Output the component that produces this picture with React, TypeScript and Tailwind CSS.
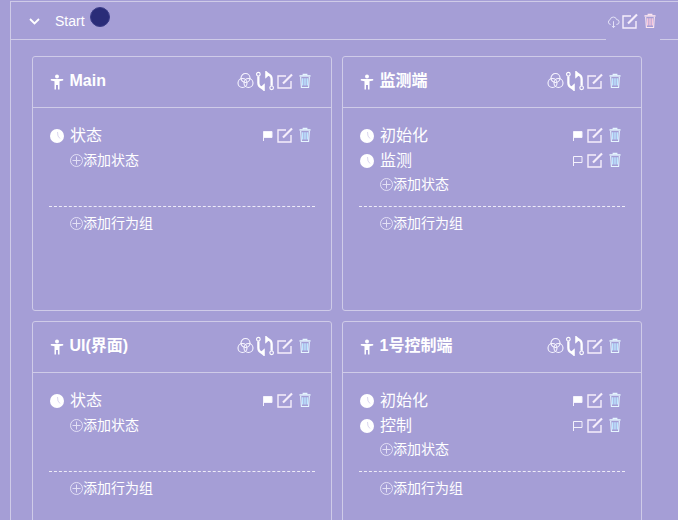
const F = '[font-family:"Liberation_Sans","Noto_Sans_CJK_SC",sans-serif]';

function Person() {
  return (
    <svg width="14" height="16" viewBox="0 0 14 16" className="shrink-0" fill="#fff">
      <circle cx="7" cy="2.400" r="2" />
      <path d="M.8 5h12.400v1.500L9.500 7.200V15.500H8V11H6v4.500H4.500V7.200L.8 6.500z" />
    </svg>
  );
}
function Circles() {
  return (
    <svg width="17" height="17" viewBox="0 0 17 17" fill="none" stroke="#f7f5ff" strokeWidth="1.100">
      <circle cx="8.500" cy="6" r="4.500" />
      <circle cx="5.500" cy="11" r="4.500" />
      <circle cx="11.500" cy="11" r="4.500" />
    </svg>
  );
}
function Compare() {
  return (
    <svg width="18" height="20" viewBox="0 0 19 20" fill="none" stroke="#fff" strokeWidth="2.400">
      <circle cx="2.500" cy="2.800" r="1.900" strokeWidth="1.200" />
      <circle cx="16.500" cy="17.200" r="1.900" strokeWidth="1.200" />
      <path d="M2.500 5v7q0 4 4 5h2" />
      <path d="M9 13v8l-4.500-4z" fill="#fff" strokeWidth="0.600" />
      <path d="M16.500 15V8q0-4-4-5h-2" />
      <path d="M10 -1v8l4.500-4z" fill="#fff" strokeWidth="0.600" />
    </svg>
  );
}
function Edit() {
  return (
    <svg width="16" height="16" viewBox="0 0 16 16" fill="none" stroke="#f6eefb" strokeWidth="1.400">
      <path d="M9 3H1v12h13V8" />
      <path d="M6 10.500 15 1.500" strokeWidth="2.200" />
    </svg>
  );
}
function Trash() {
  return (
    <svg width="12" height="16" viewBox="0 0 13 16" fill="none" stroke="#e6f6ff" strokeWidth="1.200">
      <path d="M4.500 2V.8h4V2" />
      <path d="M.500 2.500h12" strokeWidth="1.600" />
      <path d="M1.800 3.500 2.600 15h7.800l.8-11.500" />
      <path d="M4 5v8M6.500 5v8M9 5v8" stroke="#bde6ff" strokeWidth="1.600" />
    </svg>
  );
}
function PinkTrash() {
  return (
    <svg width="12" height="16" viewBox="0 0 13 16" fill="none" stroke="#fde6f0" strokeWidth="1.200">
      <path d="M4.500 2V.8h4V2" />
      <path d="M.500 2.500h12" strokeWidth="1.600" />
      <path d="M1.800 3.500 2.600 15h7.800l.8-11.500" />
      <path d="M4 5v8M6.500 5v8M9 5v8" stroke="#f8c8dc" strokeWidth="1.600" />
    </svg>
  );
}
function Cloud() {
  return (
    <svg width="13" height="12" viewBox="0 0 15 15" fill="none" stroke="#ecebfa" strokeWidth="1.100">
      <path d="M4 10.500H3.500a3 3 0 0 1-.3-5.800 4.200 4.200 0 0 1 8.200-.2 3 3 0 0 1 .3 6H11" />
      <path d="M7.500 6.500v8M5.500 12.500l2 2 2-2" />
    </svg>
  );
}
function Flag({ filled }: { filled: boolean }) {
  return (
    <svg width="10" height="10" viewBox="0 0 10 10" fill={filled ? "#fff" : "none"} stroke="#f4f2fc" strokeWidth="1">
      <path d="M.500 10V.500h8.500v6H.500" />
    </svg>
  );
}
function Clock() {
  return (
    <svg width="14" height="14" viewBox="0 0 14 14" className="shrink-0">
      <circle cx="7" cy="7" r="7" fill="#fff" />
      <path d="M7.500 3 8 7l2 2.500" stroke="#cfcbea" strokeWidth="0.800" fill="none" />
    </svg>
  );
}
function Plus() {
  return (
    <svg width="13" height="13" viewBox="0 0 13 13" fill="none" stroke="#e2dff5" strokeWidth="1" className="shrink-0">
      <circle cx="6.500" cy="6.500" r="6" />
      <path d="M6.500 2.500v8M2.500 6.500h8" />
    </svg>
  );
}
function AddRow({ label, tight }: { label: string; tight?: boolean }) {
  return (
    <div className={tight ? "flex items-center h-[25px] -mt-px pl-[20px] text-[14px] text-white" : "flex items-center h-[25px] pl-[20px] text-[14px] text-white"}>
      <Plus />
      <span>{label}</span>
    </div>
  );
}
function State({ name, filled }: { name: string; filled: boolean }) {
  return (
    <div className="flex items-center h-[25px]">
      <Clock />
      <span className="ml-[6px] text-[16px] text-white">{name}</span>
      <div className="ml-auto flex items-center pr-[4px] mb-[2px]">
        <span className="mt-[2px] flex"><Flag filled={filled} /></span>
        <span className="ml-[4px] flex"><Edit /></span>
        <span className="ml-[6px] flex"><Trash /></span>
      </div>
    </div>
  );
}
function Card({ title, states }: { title: string; states: { name: string; filled: boolean }[] }) {
  const single = states.length === 1;
  return (
    <div className="w-[300px] h-[255px] border border-[#cfcbe8] rounded-[3px]">
      <div className="h-[51px] border-b border-[#cfcbe8] flex items-center pl-[17px] pr-[20px]">
        <Person />
        <span className="ml-[5.500px] mb-[2px] text-[16px] font-bold text-white">{title}</span>
        <div className="ml-auto flex items-center mb-[3px]">
          <Circles />
          <span className="ml-[2px] flex"><Compare /></span>
          <span className="ml-[3px] flex"><Edit /></span>
          <span className="ml-[6px] flex"><Trash /></span>
        </div>
      </div>
      <div className="pt-[15px] pl-[17px] pr-[16px]">
        {states.map((s) => (
          <State key={s.name} name={s.name} filled={s.filled} />
        ))}
        <AddRow label="添加状态" tight={!single} />
        <div className={single ? "mt-[33px] -ml-px border-t border-dashed border-[#eeecf8]" : "mt-[9px] -ml-px border-t border-dashed border-[#eeecf8]"} />
        <div className="mt-[4px]">
          <AddRow label="添加行为组" />
        </div>
      </div>
    </div>
  );
}

export default function App() {
  return (
    <div className={`relative w-[678px] h-[520px] overflow-hidden bg-[#a59ed6] pl-[10px] pt-[1px] ${F}`}>
      <div className="border-l border-t border-[#cfcbe8] h-[600px]">
        <div className="h-[38px] border-b border-[#cfcbe8] flex items-center pl-[18px] pt-[2px]">
          <svg width="11" height="7" viewBox="0 0 11 7" fill="none" stroke="#fff" strokeWidth="1.800">
            <path d="M1 1l4.500 4.500L10 1" />
          </svg>
          <span className="ml-[15px] text-[14px] text-white">Start</span>
          <span className="ml-[5px] mb-[9px] w-[20px] h-[20px] rounded-full bg-[#2a2c78] border border-[#3a3c88]" />
        </div>
        <div className="pl-[21px] pt-[16px] grid grid-cols-[300px_300px] gap-x-[10px] gap-y-[10px]">
          <Card title="Main" states={[{ name: "状态", filled: true }]} />
          <Card title="监测端" states={[{ name: "初始化", filled: true }, { name: "监测", filled: false }]} />
          <Card title="UI(界面)" states={[{ name: "状态", filled: true }]} />
          <Card title="1号控制端" states={[{ name: "初始化", filled: true }, { name: "控制", filled: false }]} />
        </div>
      </div>
      <div className="absolute left-[606px] top-[11px] w-[54px] h-[31px] bg-[#a59ed6] flex items-start pl-[1px]">
        <span className="mt-[5px] flex"><Cloud /></span>
        <span className="ml-[2px] mt-[2px] flex"><Edit /></span>
        <span className="ml-[6px] mt-[2px] flex"><PinkTrash /></span>
      </div>
    </div>
  );
}
